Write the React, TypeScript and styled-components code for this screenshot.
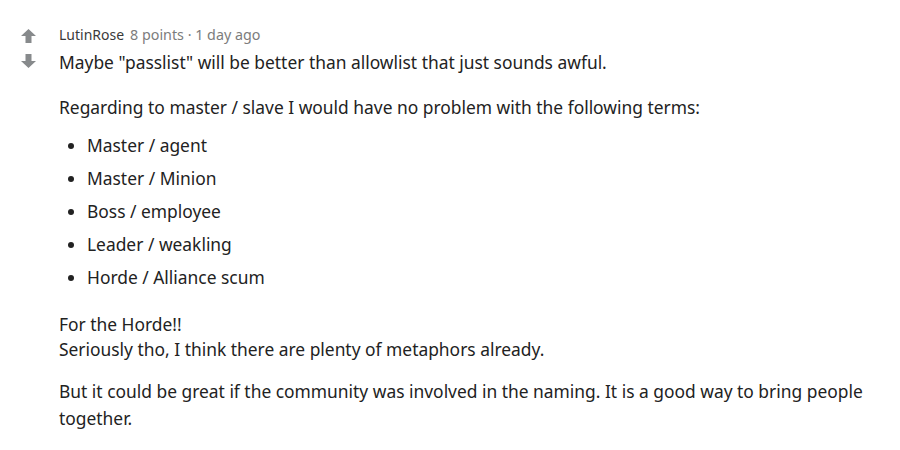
import React from "react";
import styled, { createGlobalStyle } from "styled-components";

const Global = createGlobalStyle`
  html, body { margin: 0; padding: 0; background: #ffffff; }
  body { font-family: "Noto Sans", "Open Sans", Arial, sans-serif; }
`;

const Comment = styled.div`
  display: flex;
  flex-direction: row;
  width: 900px;
  height: 450px;
  box-sizing: border-box;
  padding-right: 16px;
`;

const VoteCol = styled.div`
  width: 57px;
  flex: 0 0 57px;
  display: flex;
  flex-direction: column;
  align-items: center;
  padding-top: 29px;
  box-sizing: border-box;
  gap: 11px;
`;

const ArrowSvg = styled.svg`
  display: block;
  width: 15px;
  height: 14px;
  fill: #878a8c;
`;

const Body = styled.div`
  flex: 1;
  min-width: 0;
  padding-top: 26px;
  padding-left: 2px;
  color: #222222;
  font-size: 17.4px;
  line-height: 25px;
`;

const Meta = styled.div`
  display: flex;
  align-items: baseline;
  gap: 6px;
  font-size: 14px;
  line-height: 18px;
  height: 18px;
`;

const Author = styled.span`
  color: #3a3a3a;
`;

const Faint = styled.span`
  color: #7c7c7c;
  font-size: 14.3px;
`;

const Para = styled.p<{ $top: number; $lh?: number }>`
  margin: ${(p) => p.$top}px 0 0 0;
  line-height: ${(p) => p.$lh ?? 25}px;
`;

const List = styled.ul<{ $top: number }>`
  margin: ${(p) => p.$top}px 0 0 0;
  padding: 0 0 0 28px;
  display: flex;
  flex-direction: column;
  gap: 8px;
`;

const Item = styled.li`
  padding-left: 0;
`;

const Up = () => (
  <ArrowSvg viewBox="0 0 15 14">
    <polygon points="7.5,0 15,7 10.5,7 10.5,14 4.5,14 4.5,7 0,7" />
  </ArrowSvg>
);

const Down = () => (
  <ArrowSvg viewBox="0 0 15 14">
    <polygon points="4.5,0 10.5,0 10.5,7 15,7 7.5,14 0,7 4.5,7" />
  </ArrowSvg>
);

export default function App() {
  return (
    <>
      <Global />
      <Comment>
        <VoteCol>
          <Up />
          <Down />
        </VoteCol>
        <Body>
          <Meta>
            <Author>LutinRose</Author>
            <Faint>8 points · 1 day ago</Faint>
          </Meta>
          <Para $top={6}>Maybe "passlist" will be better than allowlist that just sounds awful.</Para>
          <Para $top={20}>Regarding to master / slave I would have no problem with the following terms:</Para>
          <List $top={13}>
            <Item>Master / agent</Item>
            <Item>Master / Minion</Item>
            <Item>Boss / employee</Item>
            <Item>Leader / weakling</Item>
            <Item>Horde / Alliance scum</Item>
          </List>
          <Para $top={22}>
            For the Horde!!
            <br />
            Seriously tho, I think there are plenty of metaphors already.
          </Para>
          <Para $top={16} $lh={27}>
            But it could be great if the community was involved in the naming. It is a good way to bring people together.
          </Para>
        </Body>
      </Comment>
    </>
  );
}
